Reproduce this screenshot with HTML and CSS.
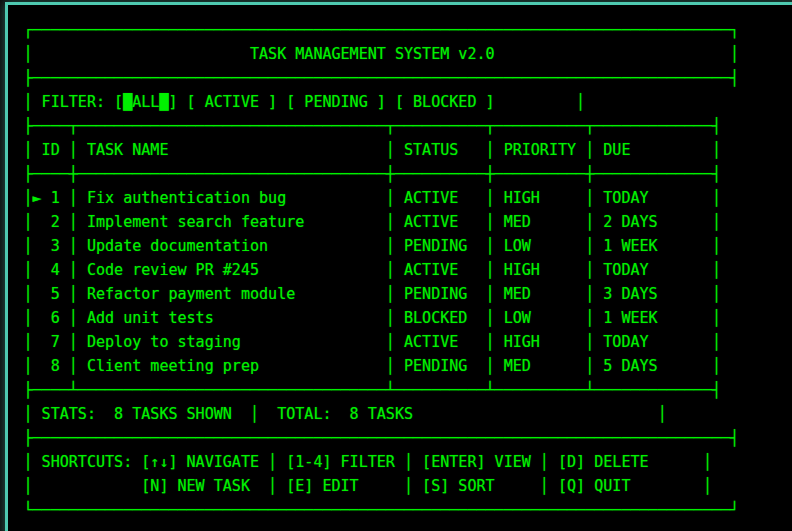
FILE: index.html
```html
<!DOCTYPE html>
<html lang="en">
<head>
<meta charset="utf-8">
<title>Task Management System v2.0</title>
<link rel="stylesheet" href="styles.css">
</head>
<body>
<div class="terminal">
<pre class="screen">┌─────────────────────────────────────────────────────────────────────────────┐
│                        TASK MANAGEMENT SYSTEM v2.0                          │
├─────────────────────────────────────────────────────────────────────────────┤
│ FILTER: [█ALL█] [ ACTIVE ] [ PENDING ] [ BLOCKED ]         │
├────┬──────────────────────────────────┬──────────┬──────────┬─────────────┤
│ ID │ TASK NAME                        │ STATUS   │ PRIORITY │ DUE         │
├────┼──────────────────────────────────┼──────────┼──────────┼─────────────┤
│► 1 │ Fix authentication bug           │ ACTIVE   │ HIGH     │ TODAY       │
│  2 │ Implement search feature         │ ACTIVE   │ MED      │ 2 DAYS      │
│  3 │ Update documentation             │ PENDING  │ LOW      │ 1 WEEK      │
│  4 │ Code review PR #245              │ ACTIVE   │ HIGH     │ TODAY       │
│  5 │ Refactor payment module          │ PENDING  │ MED      │ 3 DAYS      │
│  6 │ Add unit tests                   │ BLOCKED  │ LOW      │ 1 WEEK      │
│  7 │ Deploy to staging                │ ACTIVE   │ HIGH     │ TODAY       │
│  8 │ Client meeting prep              │ PENDING  │ MED      │ 5 DAYS      │
├────┴──────────────────────────────────┴──────────┴──────────┴─────────────┤
│ STATS:  8 TASKS SHOWN  │  TOTAL:  8 TASKS                           │
├─────────────────────────────────────────────────────────────────────────────┤
│ SHORTCUTS: [↑↓] NAVIGATE │ [1-4] FILTER │ [ENTER] VIEW │ [D] DELETE      │
│            [N] NEW TASK  │ [E] EDIT     │ [S] SORT     │ [Q] QUIT        │
└─────────────────────────────────────────────────────────────────────────────┘</pre>
</div>
</body>
</html>
```

FILE: styles.css
```css
html,
body {
  margin: 0;
  height: 100%;
  overflow: hidden;
  background: #0a0a0a;
}

body {
  box-sizing: border-box;
  padding: 2px 0 0 5px;
}

.terminal {
  box-sizing: border-box;
  width: 830px;
  height: 580px;
  border: 3px solid #4ec9b0;
  box-shadow: 0 0 10px rgba(78, 201, 176, 0.45);
  background: #000;
  padding: 12.5px 0 0 15.5px;
}

.screen {
  margin: 0;
  font-family: "DejaVu Sans Mono", monospace;
  font-size: 15.06px;
  line-height: 24px;
  color: #00f000;
  text-shadow: 0 0 1px rgba(0, 255, 0, 0.55);
  white-space: pre;
}
```
